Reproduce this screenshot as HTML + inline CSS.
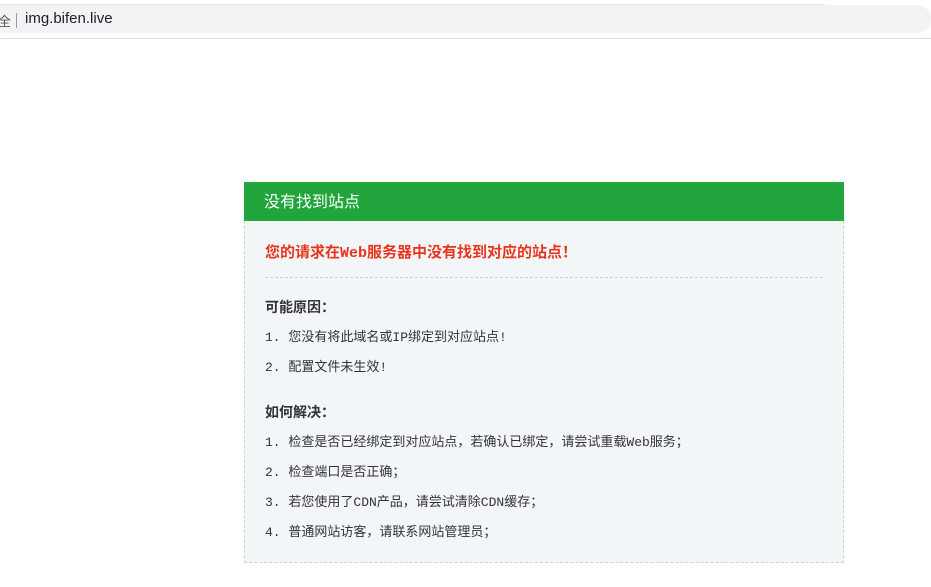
<!DOCTYPE html>
<html><head><meta charset="utf-8"><style>
body{margin:0;width:931px;height:587px;overflow:hidden;background:#fff;font-family:"Liberation Sans","Noto Sans CJK SC",sans-serif;position:relative}
.bar{position:absolute;left:0;top:0;width:931px;height:38px;background:#fff;border-bottom:1px solid #ddd}
.topline{position:absolute;left:0;top:0;width:825px;height:4px;background:#fff;border-bottom:1px solid #e6e6e6}
.url{position:absolute;left:-10px;top:5px;width:941px;height:28px;background:#f1f3f4;border-radius:14px}
.url .a{position:absolute;left:8px;top:6px;font-size:13px;color:#555}
.url .sep{position:absolute;left:26px;top:8px;width:1px;height:15px;background:#999}
.url .t{position:absolute;left:35px;top:5px;font-size:15px;color:#202124}
.box{position:absolute;left:244px;top:182px;width:600px}
.hd{background:#21a53c;height:39px;color:#fff;font-size:16px;line-height:41px;padding-left:20px}
.bd{background:#f3f6f9;border:1px dashed #c9dcc4;border-top:none;height:341px;padding:0 20px;font-family:"Liberation Mono","Noto Sans CJK SC",monospace;font-size:13px;color:#333}
.err{color:#e8341c;font-weight:bold;font-size:15px;padding-top:20px;height:36px;border-bottom:1px dashed #ccd5c8}
h4{margin:19px 0 6px;font-size:14px;color:#333}
p{margin:0;line-height:30px}
</style></head><body>
<div class="bar"><div class="topline"></div><div class="url"><span class="a">全</span><span class="sep"></span><span class="t">img.bifen.live</span></div></div>
<div class="box"><div class="hd">没有找到站点</div>
<div class="bd">
<div class="err">您的请求在Web服务器中没有找到对应的站点！</div>
<h4>可能原因：</h4>
<p>1. 您没有将此域名或IP绑定到对应站点!</p>
<p>2. 配置文件未生效!</p>
<h4 style="margin-top:19px">如何解决：</h4>
<p>1. 检查是否已经绑定到对应站点，若确认已绑定，请尝试重载Web服务；</p>
<p>2. 检查端口是否正确；</p>
<p>3. 若您使用了CDN产品，请尝试清除CDN缓存；</p>
<p>4. 普通网站访客，请联系网站管理员；</p>
</div></div>
</body></html>
